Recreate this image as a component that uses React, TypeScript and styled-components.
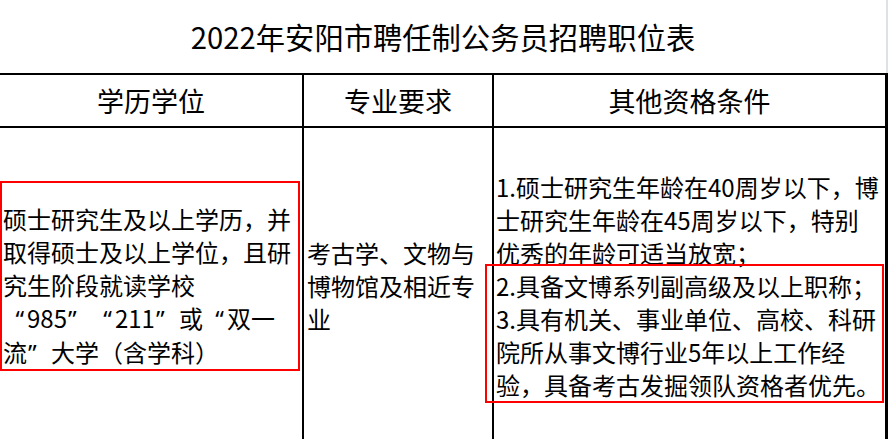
import { createGlobalStyle, styled } from "styled-components";

const rows = {
  education: [
    "硕士研究生及以上学历，并",
    "取得硕士及以上学位，且研",
    "究生阶段就读学校",
    "“985”“211”或“双一",
    "流”大学（含学科）",
  ],
  major: ["考古学、文物与", "博物馆及相近专", "业"],
  other: [
    "1.硕士研究生年龄在40周岁以下，博",
    "士研究生年龄在45周岁以下，特别",
    "优秀的年龄可适当放宽；",
    "2.具备文博系列副高级及以上职称；",
    "3.具有机关、事业单位、高校、科研",
    "院所从事文博行业5年以上工作经",
    "验，具备考古发掘领队资格者优先。",
  ],
};

export default function App() {
  return (
    <Page lang="zh-CN">
      <GlobalStyle />
      <Title>2022年安阳市聘任制公务员招聘职位表</Title>
      <Table>
        <HeadCell>学历学位</HeadCell>
        <HeadCell>专业要求</HeadCell>
        <HeadCell>其他资格条件</HeadCell>
        <BodyCell>{renderLines(rows.education)}</BodyCell>
        <BodyCell>{renderLines(rows.major)}</BodyCell>
        <BodyCell $pad={2}>{renderLines(rows.other)}</BodyCell>
      </Table>
      <Highlight $left={0} $top={181} $width={300} $height={190} />
      <Highlight $left={485} $top={264} $width={399} $height={139} />
    </Page>
  );
}

// full-width quote boxes, mark pushed to the inner side like the source
function renderQuotes(line: string) {
  return line.split(/([“”])/).map((part, i) => {
    if (part === "“") return <Quote key={i} $open>“</Quote>;
    if (part === "”") return <Quote key={i}>”</Quote>;
    return part;
  });
}

function renderLines(lines: string[]) {
  return (
    <Lines>
      {lines.map((line, i) => (
        <span key={i}>
          {renderQuotes(line)}
          {i < lines.length - 1 && <br />}
        </span>
      ))}
    </Lines>
  );
}

const GlobalStyle = createGlobalStyle`
  html, body {
    margin: 0;
    padding: 0;
    background: #fff;
  }
  body {
    font-family: "Noto Sans CJK SC", "Noto Sans", sans-serif;
    color: #000;
  }
`;

const Page = styled.div`
  position: relative;
  width: 888px;
  height: 439px;
  overflow: hidden;
  background: #fff;
`;

const Title = styled.div`
  height: 73px;
  display: flex;
  align-items: center;
  justify-content: center;
  font-size: 29.3px;
  line-height: 1;
  box-sizing: border-box;
  border-right: 2px solid #dde2e8;
`;

const Table = styled.div`
  display: grid;
  grid-template-columns: 302px 188px 391px;
  grid-template-rows: 51px 314px;
  gap: 2px;
  padding: 2px 3px 0 0;
  background: #000;
  width: 888px;
  box-sizing: border-box;
`;

const HeadCell = styled.div`
  background: #fff;
  display: flex;
  align-items: center;
  justify-content: center;
  font-size: 27px;
  line-height: 1;
`;

const BodyCell = styled.div<{ $pad?: number }>`
  background: #fff;
  display: flex;
  align-items: center;
  padding-left: ${(p) => p.$pad ?? 3}px;
  font-size: 24px;
  line-height: 33px;
`;

const Lines = styled.div`
  white-space: nowrap;
  text-spacing-trim: space-all;
`;

const Quote = styled.span<{ $open?: boolean }>`
  display: inline-block;
  width: 24px;
  box-sizing: border-box;
  font-family: "Noto Sans", sans-serif;
  text-align: ${(p) => (p.$open ? "right" : "left")};
  padding: ${(p) => (p.$open ? "0 3px 0 0" : "0 0 0 1px")};
`;

const Highlight = styled.div<{
  $left: number;
  $top: number;
  $width: number;
  $height: number;
}>`
  position: absolute;
  left: ${(p) => p.$left}px;
  top: ${(p) => p.$top}px;
  width: ${(p) => p.$width}px;
  height: ${(p) => p.$height}px;
  box-sizing: border-box;
  border: 2px solid #ff0000;
  pointer-events: none;
`;
